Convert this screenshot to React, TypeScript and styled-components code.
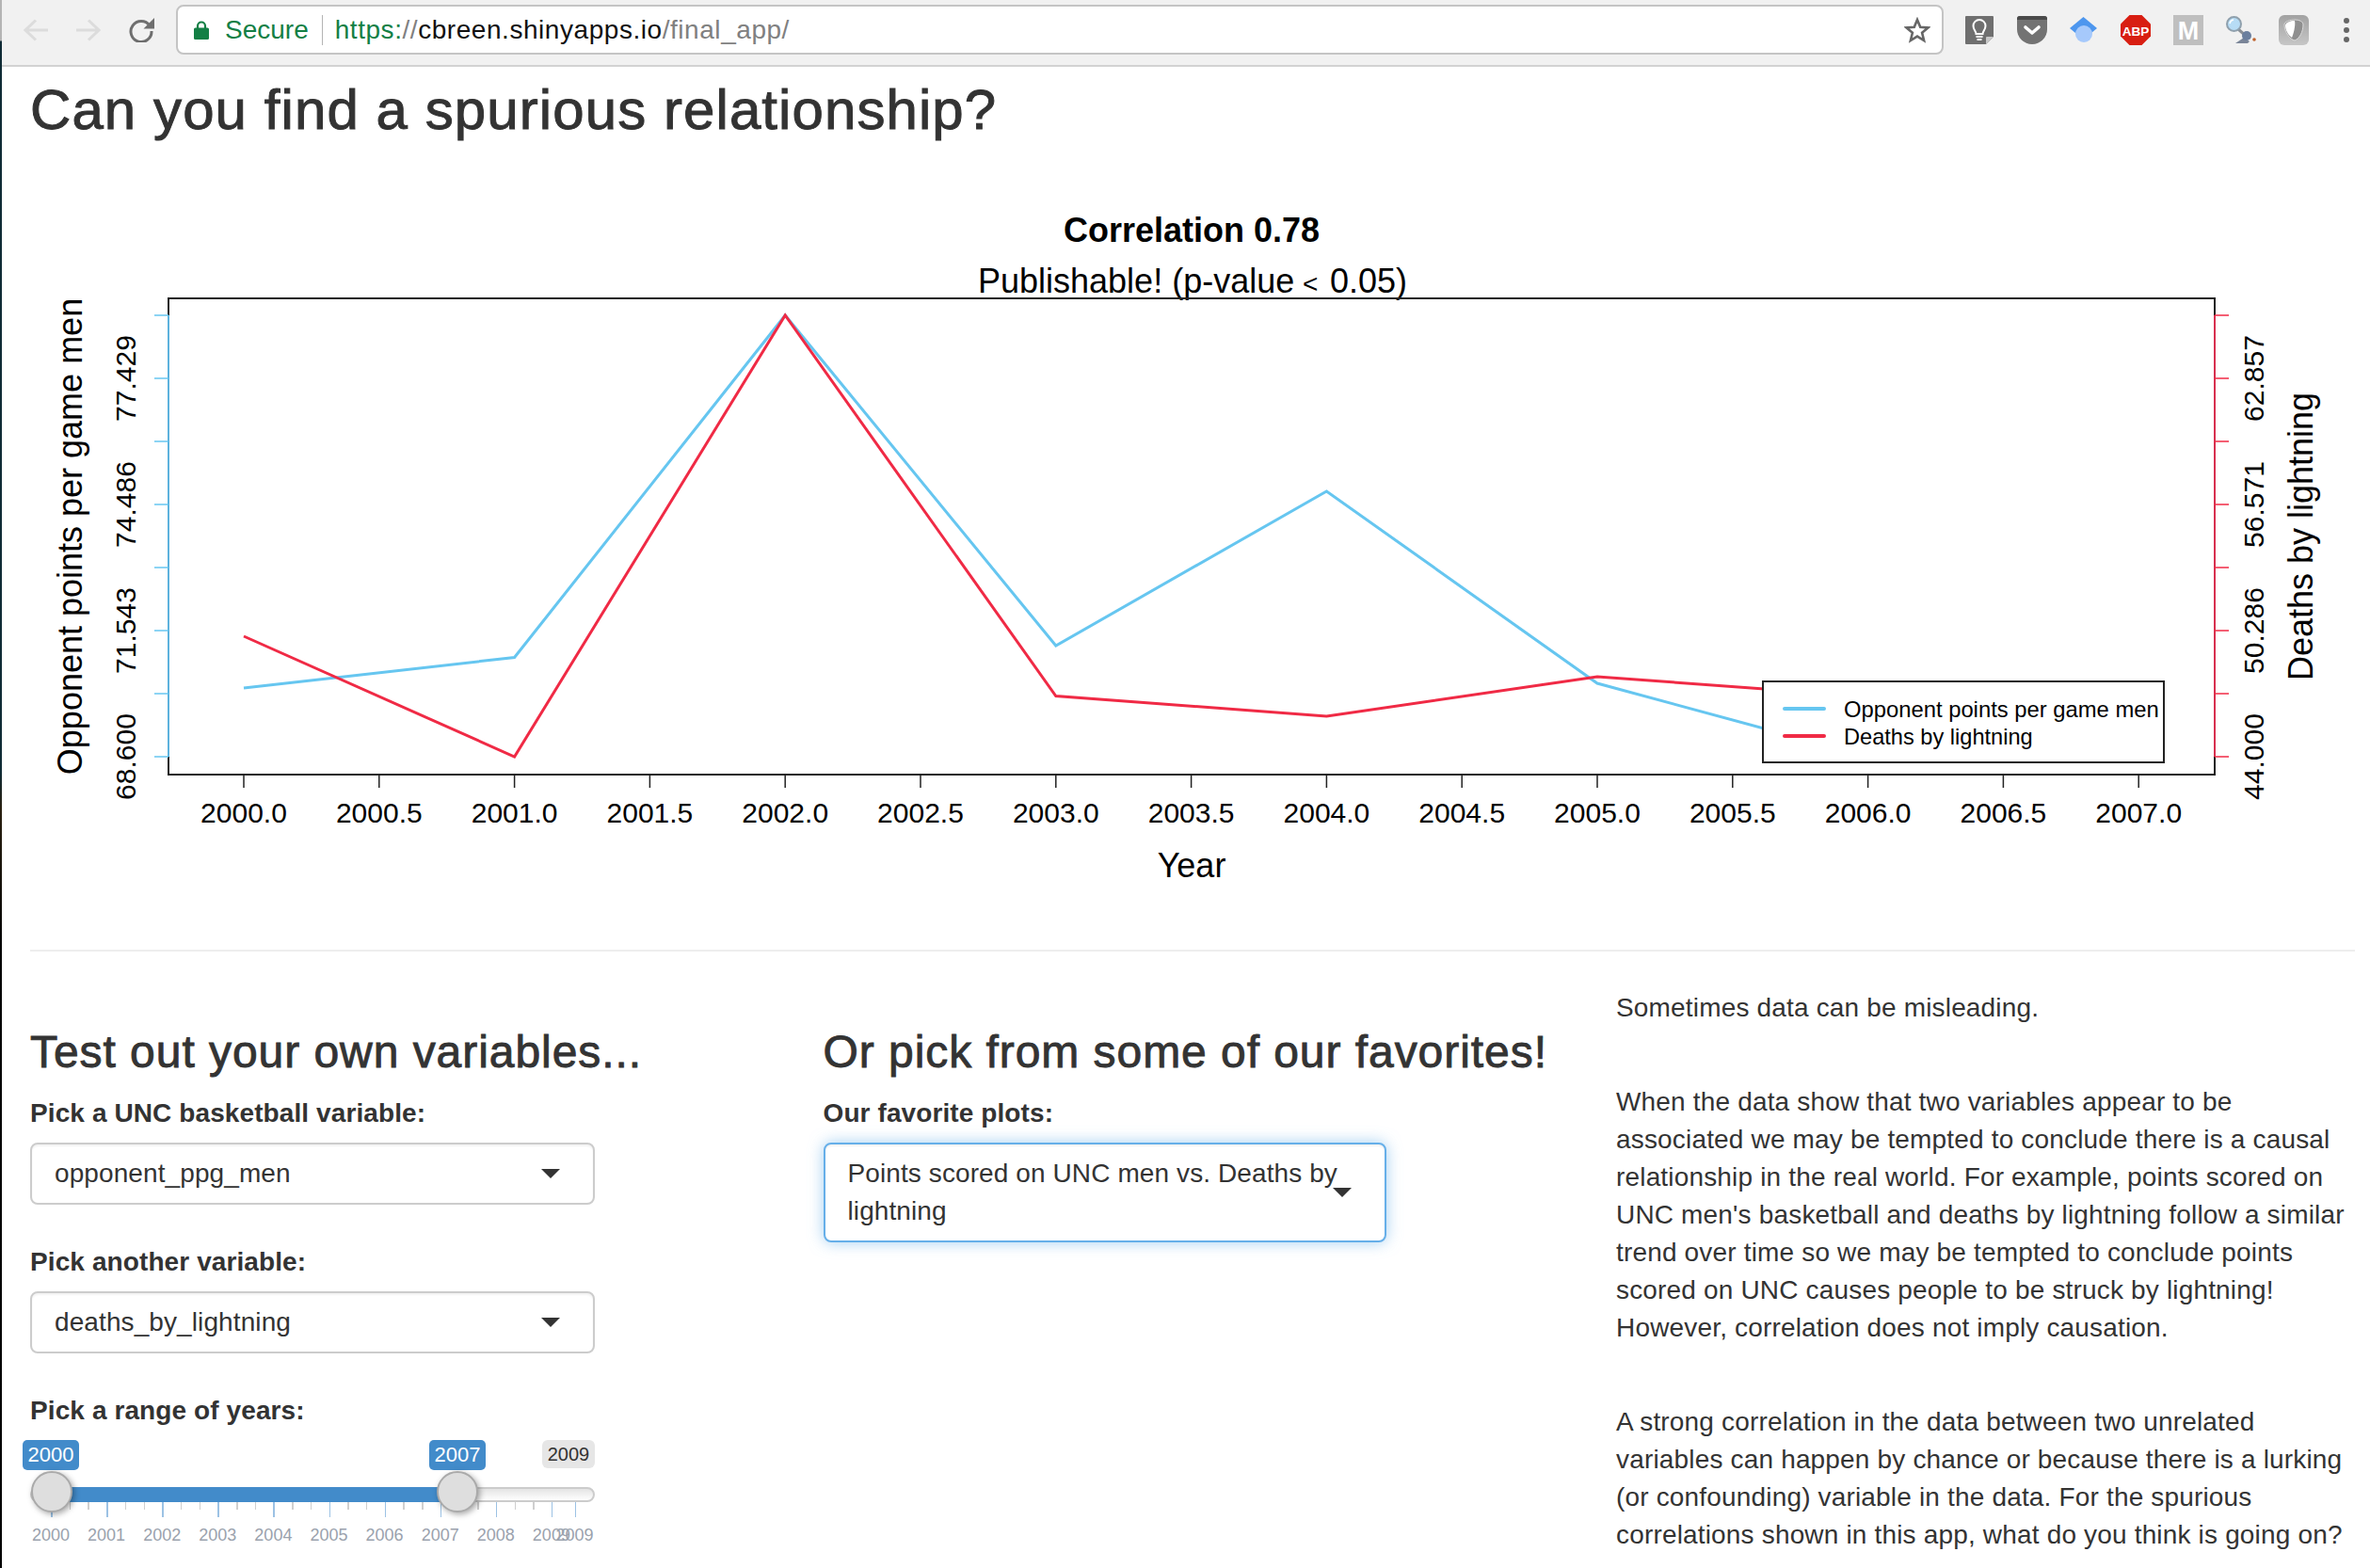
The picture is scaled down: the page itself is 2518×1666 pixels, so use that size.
import React from "react";
import styled, { createGlobalStyle } from "styled-components";

const GlobalStyle = createGlobalStyle`
  html, body { margin: 0; padding: 0; background: #fff; overflow: hidden; }
  * { box-sizing: border-box; }
  body { font-family: "Liberation Sans", Arial, sans-serif; font-size: 28px; line-height: 40px; letter-spacing: 0.17px; color: #333; }
`;

const Shell = styled.div`
  display: flex;
  width: 2518px;
  height: 1666px;
  overflow: hidden;
`;
const WindowEdge = styled.div`
  flex: none;
  width: 2px;
  background: linear-gradient(to bottom, #b4b4b4 0, #b4b4b4 43px, #0f2b35 44px, #0f2b35 820px, #2a2010 860px, #050505 1000px, #000 1666px);
`;
const Main = styled.div`
  flex: 1;
  min-width: 0;
`;

/* browser chrome */
const Toolbar = styled.header`
  display: flex;
  align-items: center;
  height: 71px;
  padding: 5px 9px 11px 23px;
  background: #f1f1f1;
  border-bottom: 2px solid #d2d2d2;
`;
const NavGroup = styled.div`
  display: flex;
  align-items: center;
  gap: 30px;
`;
const Omnibox = styled.div`
  flex: 1;
  display: flex;
  align-items: center;
  height: 53px;
  margin: 0 22px 0 23px;
  padding: 1px 12px 0 17px;
  background: #fff;
  border: 2px solid #c4c4c4;
  border-radius: 8px;
  font-size: 28px;
  letter-spacing: 0;
  white-space: nowrap;
`;
const Secure = styled.span`
  margin-left: 17px;
  color: #137f45;
`;
const OmniDivider = styled.span`
  width: 1px;
  height: 32px;
  margin: 0 13px 0 14px;
  background: #b4b4b4;
`;
const UrlPart = styled.span<{ $tone: "green" | "gray" | "black" }>`
  letter-spacing: 0.55px;
  color: ${(p) => (p.$tone === "green" ? "#137f45" : p.$tone === "gray" ? "#808080" : "#111")};
`;
const StarSlot = styled.span`
  display: flex;
  margin-left: auto;
`;
const Extensions = styled.div`
  display: flex;
  align-items: center;
  gap: 24px;
`;
const ExtensionSvg = styled.svg`
  display: block;
  overflow: visible;
`;

/* page */
const Content = styled.main`
  padding: 0 16px 0 30px;
`;
const Title = styled.h1`
  margin: 13px 0 0;
  font-size: 60px;
  line-height: 66px;
  font-weight: 400;
  letter-spacing: 1.08px;
  -webkit-text-stroke: 1px #333;
  color: #333;
`;
const ChartSvg = styled.svg`
  display: block;
  width: 2468px;
  height: 819px;
`;
const ChartText = styled.text<{ $size?: number; $bold?: boolean }>`
  font-family: "Liberation Sans", Arial, sans-serif;
  font-size: ${(p) => p.$size ?? 30}px;
  font-weight: ${(p) => (p.$bold ? 700 : 400)};
  letter-spacing: 0;
  fill: #000;
`;
const Rule = styled.hr`
  height: 2px;
  margin: 40px 0;
  border: 0;
  background: #eee;
`;
const Columns = styled.div`
  display: grid;
  grid-template-columns: repeat(3, 783px);
  column-gap: 59.5px;
`;
const Heading = styled.h3`
  margin: 40px 0 19px;
  font-size: 48px;
  line-height: 53px;
  font-weight: 400;
  letter-spacing: 0.95px;
  -webkit-text-stroke: 0.9px #333;
  color: #333;
`;
const Field = styled.div`
  margin-bottom: 41px;
`;
const Label = styled.label`
  display: block;
  margin-bottom: 11px;
  font-weight: 700;
  letter-spacing: 0.1px;
  color: #333;
`;
const Select = styled.div<{ $focused?: boolean }>`
  position: relative;
  width: ${(p) => (p.$focused ? 598 : 600)}px;
  padding: 11px 24px;
  background: #fff;
  border: 2px solid ${(p) => (p.$focused ? "#66afe9" : "#ccc")};
  border-radius: 8px;
  letter-spacing: 0.1px;
  color: #333;
  box-shadow: ${(p) => (p.$focused ? "0 0 16px rgba(102,175,233,.6), inset 0 2px 2px rgba(0,0,0,.05)" : "inset 0 2px 2px rgba(0,0,0,.05)")};
`;
const Caret = styled.span`
  position: absolute;
  top: calc(50% - 5px);
  right: 35px;
  width: 0;
  height: 0;
  border-style: solid;
  border-width: 10px 10px 0;
  border-color: #333 transparent transparent;
`;
const Slider = styled.div`
  position: relative;
  width: 600px;
  height: 125px;
`;
const Track = styled.div`
  position: absolute;
  top: 50px;
  left: 0;
  right: 0;
  height: 16px;
  border: 2px solid #ccc;
  border-radius: 8px;
  background: linear-gradient(to bottom, #e4e4e4, #fff);
`;
const Fill = styled.div`
  position: absolute;
  top: 50px;
  left: 23px;
  width: 430px;
  height: 16px;
  background: #428bca;
`;
const Handle = styled.div<{ $left: number }>`
  position: absolute;
  z-index: 2;
  top: 33px;
  left: ${(p) => p.$left}px;
  width: 44px;
  height: 44px;
  border: 2px solid #aaa;
  border-radius: 50%;
  background: #dedede;
  box-shadow: 2px 2px 6px rgba(0, 0, 0, 0.35);
`;
const ValueBadge = styled.span<{ $left: number }>`
  position: absolute;
  top: 0;
  left: ${(p) => p.$left}px;
  width: 60px;
  height: 32px;
  border-radius: 5px;
  background: #428bca;
  color: #fff;
  font-size: 22px;
  line-height: 32px;
  letter-spacing: 0;
  text-align: center;
`;
const MaxBadge = styled.span`
  position: absolute;
  top: 0;
  left: 544px;
  width: 56px;
  height: 30px;
  border-radius: 6px;
  background: #e6e6e6;
  color: #333;
  font-size: 20px;
  line-height: 30px;
  letter-spacing: 0;
  text-align: center;
`;
const Tick = styled.span<{ $major?: boolean }>`
  position: absolute;
  top: 66px;
  width: 1.5px;
  height: ${(p) => (p.$major ? 16 : 8)}px;
  background: ${(p) => (p.$major ? "#9cc2e4" : "#cfcfcf")};
`;
const TickLabel = styled.span`
  position: absolute;
  top: 89px;
  width: 60px;
  margin-left: -30px;
  color: #9aa2ad;
  font-size: 18px;
  line-height: 24px;
  letter-spacing: 0;
  text-align: center;
`;
const Prose = styled.p`
  margin: 0 0 60px;
  color: #333;
`;

/* icons */
const BackIcon = () => (
  <svg width="26" height="24" viewBox="0 0 26 24" fill="none" stroke="#dcdcdc" strokeWidth="3">
    <path d="M26 12H2M13 1.5 2 12l11 10.5" />
  </svg>
);
const ForwardIcon = () => (
  <svg width="26" height="24" viewBox="0 0 26 24" fill="none" stroke="#dcdcdc" strokeWidth="3">
    <path d="M0 12h24M13 1.5 24 12 13 22.5" />
  </svg>
);
const ReloadIcon = () => (
  <svg width="27" height="26" viewBox="0 0 27 26" fill="none">
    <path d="M22 8.2A11 11 0 1 0 24 14" stroke="#6e6e6e" strokeWidth="3" />
    <path d="M27 0v11.5H15.5z" fill="#6e6e6e" />
  </svg>
);
const LockIcon = () => (
  <svg width="16" height="20" viewBox="0 0 16 20">
    <path d="M4 8V5.5a4 4 0 0 1 8 0V8" fill="none" stroke="#137f45" strokeWidth="2.2" />
    <rect y="7.5" width="16" height="12.5" rx="1.5" fill="#137f45" />
  </svg>
);
const StarIcon = () => (
  <svg width="28" height="28" viewBox="0 0 28 28">
    <path d="M14 3l3.2 7.8 8.3.6-6.4 5.4 2 8.2L14 20.6 6.9 25l2-8.2-6.4-5.4 8.3-.6z" fill="none" stroke="#666" strokeWidth="2.6" />
  </svg>
);
const KeepIcon = () => (
  <ExtensionSvg width="32" height="32" viewBox="0 0 32 32">
    <path d="M2 1h28a1 1 0 0 1 1 1v21l-8 8H2a1 1 0 0 1-1-1V2a1 1 0 0 1 1-1z" fill="#6f6f6f" />
    <path d="M23 31v-7a1 1 0 0 1 1-1h7z" fill="#c8c8c8" />
    <path d="M12.5 20c0-3-3-4.5-3-8.5a6.5 6.5 0 0 1 13 0c0 4-3 5.5-3 8.5z" fill="none" stroke="#fff" strokeWidth="2" />
    <path d="M12.5 23h7M13.5 26h5" stroke="#fff" strokeWidth="2" />
  </ExtensionSvg>
);
const PocketIcon = () => (
  <ExtensionSvg width="32" height="30" viewBox="0 0 32 30">
    <path d="M3 0h26a3 3 0 0 1 3 3v11a16 16 0 0 1-32 0V3a3 3 0 0 1 3-3z" fill="#737373" />
    <path d="M0 3a3 3 0 0 1 3-3h26a3 3 0 0 1 3 3v1H0z" fill="#4a4a4a" />
    <path d="M9 12l7 6 7-6" fill="none" stroke="#fff" strokeWidth="3.6" strokeLinecap="round" strokeLinejoin="round" />
  </ExtensionSvg>
);
const ScholarIcon = () => (
  <ExtensionSvg width="30" height="28" viewBox="0 0 30 28">
    <path d="M14.5 0 29 12 14.5 24 0 12z" fill="#4d96ee" />
    <circle cx="15" cy="18" r="9" fill="#a6c9fb" />
  </ExtensionSvg>
);
const AbpIcon = () => (
  <ExtensionSvg width="32" height="32" viewBox="0 0 32 32">
    <path d="M9.5 0h13L32 9.500v13L22.5 32h-13L0 22.500v-13z" fill="#d81e12" />
    <text x="16" y="21.500" textAnchor="middle" fontFamily="Liberation Sans, Arial, sans-serif" fontWeight="700" fontSize="13.5" letterSpacing="0" fill="#fff">ABP</text>
  </ExtensionSvg>
);
const MailIcon = () => (
  <ExtensionSvg width="32" height="32" viewBox="0 0 32 32">
    <rect width="32" height="32" fill="#bfbfbf" />
    <text x="16" y="26" textAnchor="middle" fontFamily="Liberation Sans, Arial, sans-serif" fontWeight="700" fontSize="27" letterSpacing="0" fill="#fff">M</text>
  </ExtensionSvg>
);
const LensIcon = () => (
  <ExtensionSvg width="32" height="30" viewBox="0 0 32 30">
    <path d="M13 14l8 7" stroke="#8a8f96" strokeWidth="3" />
    <path d="M10 29l9-6 6 4-2 2z" fill="#7a8598" />
    <circle cx="22" cy="21" r="5" fill="#6b7f9e" />
    <circle cx="30" cy="25" r="1.8" fill="#c0622c" />
    <circle cx="8.5" cy="8.5" r="7.5" fill="#b7dcf5" stroke="#8fa0ad" strokeWidth="2" />
    <path d="M4 8a5 5 0 0 1 4-4" fill="none" stroke="#fff" strokeWidth="1.5" />
  </ExtensionSvg>
);
const ShieldIcon = () => (
  <ExtensionSvg width="32" height="32" viewBox="0 0 32 32">
    <defs>
      <linearGradient id="shieldBg" x1="0" y1="0" x2="0" y2="1">
        <stop offset="0" stopColor="#a2a2a2" />
        <stop offset="1" stopColor="#c6c6c6" />
      </linearGradient>
    </defs>
    <rect width="32" height="32" rx="6" fill="url(#shieldBg)" />
    <path d="M6 10c0-3 6-5 11-5s9 2 9 5c0 8-4 15-9 17-5-1-11-9-11-17z" fill="#8f8f8f" stroke="#dadada" strokeWidth="1" />
    <path d="M7 11c0-3 5-5 10-5 1 5-1 13-3 18-4-3-7-8-7-13z" fill="#fff" />
  </ExtensionSvg>
);
const MenuIcon = () => (
  <ExtensionSvg width="32" height="32" viewBox="0 0 32 32" fill="#666">
    <circle cx="16" cy="6" r="3" />
    <circle cx="16" cy="16" r="3" />
    <circle cx="16" cy="26" r="3" />
  </ExtensionSvg>
);

/* chart data, in page pixels */
const xAt = (i: number) => 259 + 287.6 * i;
const toPath = (ys: number[]) => ys.map((y, i) => `${i ? "L" : "M"}${xAt(i).toFixed(1)} ${y}`).join(" ");
const blueSeries = [731, 698.5, 335, 686, 522, 726, 804, 770];
const redSeries = [676, 804, 335, 739.5, 761, 719, 740, 760];
const xTicks = Array.from({ length: 15 }, (_, i) => 2000 + i / 2);
const yTicks = [804, 737, 670, 603, 536, 469, 402, 335];
const leftLabels: [number, string][] = [[804, "68.600"], [670, "71.543"], [536, "74.486"], [402, "77.429"]];
const rightLabels: [number, string][] = [[804, "44.000"], [670, "50.286"], [536, "56.571"], [402, "62.857"]];

const Chart = () => (
  <ChartSvg viewBox="32 150 2468 819">
    <ChartText $bold $size={36} x="1266" y="257" textAnchor="middle">Correlation 0.78</ChartText>
    <ChartText $size={36} x="1039" y="311">
      Publishable! (p-value
      <tspan x="1384" fontSize="28">&lt;</tspan>
      <tspan x="1413">0.05)</tspan>
    </ChartText>

    <path d={toPath(blueSeries)} fill="none" stroke="#66c6f0" strokeWidth="3" />
    <path d={toPath(redSeries)} fill="none" stroke="#f02a45" strokeWidth="3" />
    <rect x="179" y="317" width="2174" height="506" fill="none" stroke="#222" strokeWidth="2" />

    {xTicks.map((t) => (
      <g key={t}>
        <line x1={259 + (t - 2000) * 287.6} x2={259 + (t - 2000) * 287.6} y1="823" y2="837" stroke="#222" strokeWidth="1.5" />
        <ChartText x={259 + (t - 2000) * 287.6} y="874" textAnchor="middle">{t.toFixed(1)}</ChartText>
      </g>
    ))}
    <ChartText $size={36} x="1266" y="932" textAnchor="middle">Year</ChartText>

    <line x1="179" x2="179" y1="335" y2="804" stroke="#5db2dd" strokeWidth="2" />
    <line x1="2353" x2="2353" y1="335" y2="804" stroke="#d7304f" strokeWidth="2" />
    {yTicks.map((y) => (
      <g key={y}>
        <line x1="164" x2="179" y1={y} y2={y} stroke="#66c6f0" strokeWidth="1.5" />
        <line x1="2353" x2="2368" y1={y} y2={y} stroke="#f02a45" strokeWidth="1.5" />
      </g>
    ))}
    {leftLabels.map(([y, s]) => (
      <ChartText key={s} x="144" y={y} textAnchor="middle" transform={`rotate(-90 144 ${y})`}>{s}</ChartText>
    ))}
    {rightLabels.map(([y, s]) => (
      <ChartText key={s} x="2405" y={y} textAnchor="middle" transform={`rotate(-90 2405 ${y})`}>{s}</ChartText>
    ))}
    <ChartText $size={36} x="87" y="570" textAnchor="middle" transform="rotate(-90 87 570)">Opponent points per game men</ChartText>
    <ChartText $size={36} x="2457" y="570" textAnchor="middle" transform="rotate(-90 2457 570)">Deaths by lightning</ChartText>

    <rect x="1873" y="724" width="426" height="86" fill="#fff" stroke="#222" strokeWidth="2" />
    <line x1="1896" x2="1938" y1="753" y2="753" stroke="#66c6f0" strokeWidth="4" strokeLinecap="round" />
    <line x1="1896" x2="1938" y1="782" y2="782" stroke="#f02a45" strokeWidth="4" strokeLinecap="round" />
    <ChartText $size={23.8} x="1959" y="762">Opponent points per game men</ChartText>
    <ChartText $size={23.6} x="1959" y="791">Deaths by lightning</ChartText>
  </ChartSvg>
);

const majorTicks = [...Array.from({ length: 10 }, (_, i) => 22 + 59.1 * i), 578.6];
const minorTicks = Array.from({ length: 9 }, (_, i) => [22 + 59.1 * i + 19.7, 22 + 59.1 * i + 39.4]).flat();
const tickYears = ["2000", "2001", "2002", "2003", "2004", "2005", "2006", "2007", "2008", "2009", "2009"];

const RangeSlider = () => (
  <Slider>
    <ValueBadge $left={-8}>2000</ValueBadge>
    <ValueBadge $left={424}>2007</ValueBadge>
    <MaxBadge>2009</MaxBadge>
    <Track />
    <Fill />
    {minorTicks.map((x) => (
      <Tick key={x} style={{ left: x }} />
    ))}
    {majorTicks.map((x, i) => (
      <React.Fragment key={x}>
        <Tick $major style={{ left: x }} />
        <TickLabel style={{ left: x }}>{tickYears[i]}</TickLabel>
      </React.Fragment>
    ))}
    <Handle $left={1} />
    <Handle $left={432} />
  </Slider>
);

export default function App() {
  return (
    <>
      <GlobalStyle />
      <Shell>
        <WindowEdge />
        <Main>
          <Toolbar>
            <NavGroup>
              <BackIcon />
              <ForwardIcon />
              <ReloadIcon />
            </NavGroup>
            <Omnibox>
              <LockIcon />
              <Secure>Secure</Secure>
              <OmniDivider />
              <UrlPart $tone="green">https:</UrlPart>
              <UrlPart $tone="gray">//</UrlPart>
              <UrlPart $tone="black">cbreen.shinyapps.io</UrlPart>
              <UrlPart $tone="gray">/final_app/</UrlPart>
              <StarSlot>
                <StarIcon />
              </StarSlot>
            </Omnibox>
            <Extensions>
              <KeepIcon />
              <PocketIcon />
              <ScholarIcon />
              <AbpIcon />
              <MailIcon />
              <LensIcon />
              <ShieldIcon />
              <MenuIcon />
            </Extensions>
          </Toolbar>
          <Content>
            <Title>Can you find a spurious relationship?</Title>
            <Chart />
            <Rule />
            <Columns>
              <section>
                <Heading>Test out your own variables...</Heading>
                <Field>
                  <Label>Pick a UNC basketball variable:</Label>
                  <Select>
                    opponent_ppg_men
                    <Caret />
                  </Select>
                </Field>
                <Field>
                  <Label>Pick another variable:</Label>
                  <Select>
                    deaths_by_lightning
                    <Caret />
                  </Select>
                </Field>
                <div>
                  <Label>Pick a range of years:</Label>
                  <RangeSlider />
                </div>
              </section>
              <section>
                <Heading>Or pick from some of our favorites!</Heading>
                <Label>Our favorite plots:</Label>
                <Select $focused>
                  Points scored on UNC men vs. Deaths by lightning
                  <Caret />
                </Select>
              </section>
              <section>
                <Prose>Sometimes data can be misleading.</Prose>
                <Prose>
                  When the data show that two variables appear to be associated we may be tempted to conclude there is a causal relationship in the real world. For example, points scored on UNC men's basketball and deaths by lightning follow a similar trend over time so we may be tempted to conclude points scored on UNC causes people to be struck by lightning! However, correlation does not imply causation.
                </Prose>
                <Prose>
                  A strong correlation in the data between two unrelated variables can happen by chance or because there is a lurking (or confounding) variable in the data. For the spurious correlations shown in this app, what do you think is going on?
                </Prose>
              </section>
            </Columns>
          </Content>
        </Main>
      </Shell>
    </>
  );
}
